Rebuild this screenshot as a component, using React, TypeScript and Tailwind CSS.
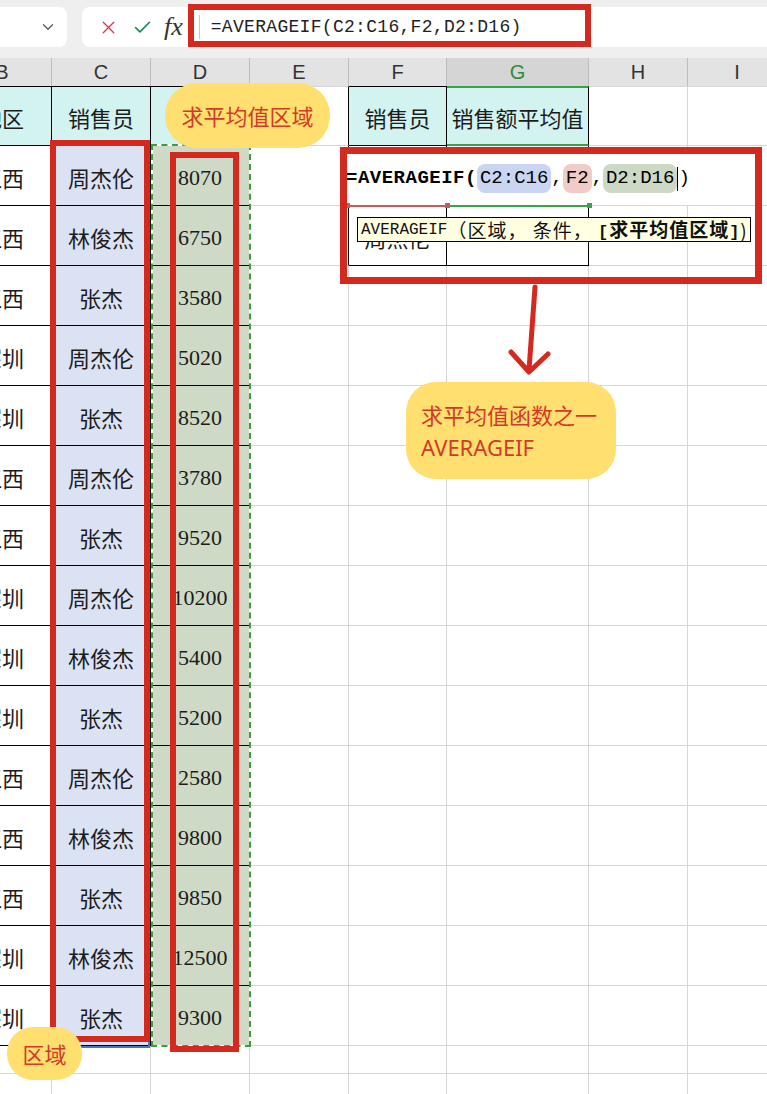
import { Check, ChevronDown, X } from "lucide-react";

const regions = [
  ["江西", "周杰伦", "8070"],
  ["江西", "林俊杰", "6750"],
  ["江西", "张杰", "3580"],
  ["深圳", "周杰伦", "5020"],
  ["深圳", "张杰", "8520"],
  ["江西", "周杰伦", "3780"],
  ["江西", "张杰", "9520"],
  ["深圳", "周杰伦", "10200"],
  ["深圳", "林俊杰", "5400"],
  ["深圳", "张杰", "5200"],
  ["江西", "周杰伦", "2580"],
  ["江西", "林俊杰", "9800"],
  ["江西", "张杰", "9850"],
  ["深圳", "林俊杰", "12500"],
  ["深圳", "张杰", "9300"],
];

const letters = [
  { key: "B", w: "w-[99px]" },
  { key: "C", w: "w-[99px]" },
  { key: "D", w: "w-[99px]" },
  { key: "E", w: "w-[99px]" },
  { key: "F", w: "w-[98px]" },
  { key: "G", w: "w-[142px]" },
  { key: "H", w: "w-[99px]" },
  { key: "I", w: "w-[99px]" },
];

const cell = "flex shrink-0 items-center justify-center pt-[3px]";

function DataRow({ region, name, amount, index }: { region: string; name: string; amount: string; index: number }) {
  const boxed = index <= 1;
  return (
    <div className="flex h-[60px]">
      <div className={`${cell} w-[99px] border-b border-r border-black bg-white`}>{region}</div>
      <div className={`${cell} w-[99px] border-b border-r border-black bg-[#dbe2f4]`}>{name}</div>
      <div className={`${cell} w-[99px] border-b border-r border-black bg-[#cfdac6] font-['Liberation_Serif',serif] text-[22px]`}>
        {amount}
      </div>
      <div className={`${cell} w-[99px] border-b border-[#d6d6d6] ${boxed ? "border-r border-r-black" : "border-r"}`} />
      <div className={`${cell} w-[98px] border-b border-r ${boxed ? "border-black" : "border-[#d6d6d6]"}`}>
        {index === 1 ? "周杰伦" : null}
      </div>
      <div className={`${cell} w-[142px] border-b border-r ${boxed ? "border-black" : "border-[#d6d6d6]"}`} />
      <div className={`${cell} w-[99px] border-b border-r border-[#d6d6d6]`} />
      <div className={`${cell} w-[99px] border-b border-r border-[#d6d6d6]`} />
    </div>
  );
}

function EmptyRow() {
  return (
    <div className="flex h-[28px]">
      {letters.map((l) => (
        <div key={l.key} className={`${l.w} shrink-0 border-b border-r border-[#d6d6d6]`} />
      ))}
    </div>
  );
}

export default function App() {
  return (
    <div className="relative h-[1094px] w-[767px] overflow-hidden bg-white font-['Noto_Sans_CJK_SC',sans-serif] text-[22px] text-[#1c1c1c]">
      {/* formula bar */}
      <div className="flex h-[58px] items-start gap-[15px] bg-[#efefef] pt-[7px]">
        <div className="flex h-[40px] w-[67px] shrink-0 items-center justify-end rounded-r-lg bg-white pr-[10px]">
          <ChevronDown size={18} strokeWidth={1.6} className="text-[#555]" />
        </div>
        <div className="flex h-[40px] flex-1 items-center rounded-l-lg bg-white pl-[16px]">
          <X size={21} strokeWidth={1.6} className="text-[#d23c56]" />
          <Check size={21} strokeWidth={1.8} className="ml-[13px] text-[#13864f]" />
          <span className="ml-[11px] font-['Liberation_Serif',serif] text-[26px] italic leading-none text-[#333]">fx</span>
          <span className="ml-[16px] h-[24px] w-px bg-[#c8c8c8]" />
          <span className="ml-[11px] font-['Liberation_Mono',monospace] text-[18px] tracking-[0.3px] text-[#222]">=AVERAGEIF(C2:C16,F2,D2:D16)</span>
        </div>
      </div>

      <div className="-ml-[47px]">
        {/* column letters */}
        <div className="flex h-[28px] bg-[#e3e3e3] font-['Liberation_Sans',sans-serif] text-[20px] text-[#333]">
          {letters.map((l) => (
            <div
              key={l.key}
              className={`flex shrink-0 items-center justify-center ${l.w} border-r border-[#bdbdbd] ${l.key === "G" ? "bg-[#d5d5d5] text-[#2e8b3a]" : ""}`}
            >
              {l.key}
            </div>
          ))}
        </div>

        {/* header row */}
        <div className="flex h-[60px]">
          <div className={`${cell} w-[99px] border-y border-r border-black bg-[#d3f3f1]`}>地区</div>
          <div className={`${cell} w-[99px] border-y border-r border-black bg-[#d3f3f1]`}>销售员</div>
          <div className={`${cell} w-[99px] border-y border-r border-black bg-[#d3f3f1]`}>销售额</div>
          <div className={`${cell} w-[99px] border-y border-r border-[#d6d6d6] border-r-black bg-white`} />
          <div className={`${cell} w-[98px] border-y border-r border-black bg-[#d3f3f1]`}>销售员</div>
          <div className={`${cell} w-[142px] border-y-2 border-r border-y-[#3aa348] border-r-black bg-[#d3f3f1]`}>销售额平均值</div>
          <div className={`${cell} w-[99px] border-y border-r border-[#d6d6d6]`} />
          <div className={`${cell} w-[99px] border-y border-r border-[#d6d6d6]`} />
        </div>

        {regions.map(([region, name, amount], index) => (
          <DataRow key={index} region={region} name={name} amount={amount} index={index} />
        ))}
        <EmptyRow />
        <EmptyRow />
      </div>

      {/* selection of C and D */}
      <div className="absolute left-[50px] top-[144px] h-[904px] w-[100px] border-2 border-[#4a72c8]" />
      <div className="absolute left-[151px] top-[144px] h-[903px] w-[100px] border-2 border-white" />
      <div className="absolute left-[151px] top-[144px] h-[903px] w-[100px] border-2 border-dashed border-[#3d9c3d]" />

      {/* red markers */}
      <div className="absolute left-[188px] top-[4px] h-[43px] w-[403px] border-[6px] border-[#d4291f]" />
      <div className="absolute left-[50px] top-[140px] h-[902px] w-[100px] border-[6px] border-[#d4291f]" />
      <div className="absolute left-[170px] top-[152px] h-[900px] w-[69px] border-[6px] border-[#d4291f]" />

      {/* in-cell editor */}
      <div className="absolute left-[346px] top-[148px] flex h-[57px] w-[410px] items-center bg-white pt-[4px] font-['Liberation_Mono','Noto_Sans_CJK_SC',monospace] text-[19px] text-black">
        <span className="font-bold tracking-[0.5px]">=AVERAGEIF(</span>
        <span className="rounded-lg bg-[#c9d5f1] px-[3px]">C2:C16</span>
        <span>,</span>
        <span className="rounded-lg bg-[#f1cbc8] px-[3px]">F2</span>
        <span>,</span>
        <span className="rounded-lg bg-[#cdd9c4] px-[3px]">D2:D16</span>
        <span className="h-[24px] w-px bg-black" />
        <span>)</span>
      </div>
      <div className="absolute left-[347px] top-[205px] h-[2px] w-[100px] bg-[#c85a5a]" />
      <div className="absolute left-[449px] top-[205px] h-[2px] w-[140px] bg-[#3aa348]" />
      <div className="absolute left-[345px] top-[203px] h-[5px] w-[5px] bg-[#c85a5a]" />
      <div className="absolute left-[445px] top-[203px] h-[5px] w-[5px] bg-[#c85a5a]" />
      <div className="absolute left-[587px] top-[203px] h-[5px] w-[5px] bg-[#3aa348]" />

      {/* tooltip */}
      <div className="absolute left-[357px] top-[217px] flex h-[25px] w-[394px] items-center border border-black bg-[#ffffe1] pl-[3px] text-[19px] leading-none text-[#111]">
        <span className="font-['Liberation_Mono',monospace] text-[16px]">AVERAGEIF</span>
        <span className="tracking-[1px]">（区域，&nbsp;条件，&nbsp;</span>
        <span className="font-bold tracking-[1px]">
          <span className="font-['Liberation_Mono',monospace] text-[17px]">[</span>求平均值区域<span className="font-['Liberation_Mono',monospace] text-[17px]">]</span>
        </span>
        <span>)</span>
      </div>
      <div className="absolute left-[340px] top-[147px] h-[137px] w-[422px] border-[7px] border-[#d4291f]" />

      {/* arrow */}
      <svg className="absolute left-[500px] top-[284px]" width="60" height="95" viewBox="0 0 60 95">
        <path d="M35 3 L29 86" stroke="#d4291f" strokeWidth="5" strokeLinecap="round" fill="none" />
        <path d="M11 68 L29 88 L48 70" stroke="#d4291f" strokeWidth="5" strokeLinecap="round" strokeLinejoin="round" fill="none" />
      </svg>

      {/* callouts */}
      <div className="absolute left-[165px] top-[83px] flex h-[65px] w-[165px] items-center justify-center rounded-[32px] bg-[#ffdf6f] text-[22px] text-[#d23a28]">
        求平均值区域
      </div>
      <div className="absolute left-[406px] top-[382px] flex h-[97px] w-[210px] flex-col justify-center rounded-[30px] bg-[#ffdf6f] pl-[15px] text-[22px] leading-[33px] text-[#d23a28]">
        <span>求平均值函数之一</span>
        <span className="font-['Noto_Sans',sans-serif]">AVERAGEIF</span>
      </div>
      <div className="absolute left-[7px] top-[1027px] flex h-[53px] w-[75px] items-center justify-center rounded-[26px] bg-[#ffdf6f] text-[22px] text-[#d23a28]">
        区域
      </div>
    </div>
  );
}
